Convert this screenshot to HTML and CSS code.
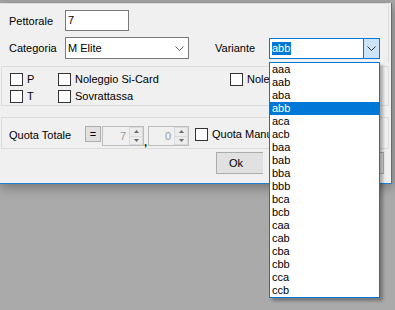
FILE: index.html
```html
<!DOCTYPE html>
<html lang="it">
<head>
    <meta charset="UTF-8">
    <title>Iscrizione</title>
    <link rel="stylesheet" href="styles.css">
</head>
<body>

    <div class="window">

        <!-- Dati concorrente -->
        <div class="grp grp-top">
            <div class="row">
                <span class="lbl-main">Pettorale</span>
                <div class="textbox">7</div>
            </div>
            <div class="row row-cat">
                <span class="lbl-main">Categoria</span>
                <div class="combo combo-cat">
                    <span class="combo-text">M Elite</span>
                    <span class="combo-arrow">
                        <svg width="9" height="5" viewBox="0 0 9 5"><polyline points="0.5,0.5 4.5,4.5 8.5,0.5" fill="none" stroke="#606060"/></svg>
                    </span>
                </div>
                <span class="lbl-var">Variante</span>
                <div class="combo combo-var">
                    <span class="combo-text"><span class="sel">abb</span></span>
                    <span class="combo-btn">
                        <svg width="9" height="5" viewBox="0 0 9 5"><polyline points="0.5,0.5 4.5,4.5 8.5,0.5" fill="none" stroke="#333"/></svg>
                    </span>
                </div>
            </div>
        </div>

        <!-- Opzioni -->
        <div class="grp grp-opt">
            <div class="opt-grid">
                <label class="chk"><span class="box"></span>P</label>
                <label class="chk"><span class="box"></span>Noleggio Si-Card</label>
                <label class="chk chk-clip"><span class="box"></span>Noleggio Chip</label>
                <label class="chk"><span class="box"></span>T</label>
                <label class="chk"><span class="box"></span>Sovrattassa</label>
            </div>
        </div>

        <!-- Quota -->
        <div class="grp grp-quota">
            <span class="lbl-quota">Quota Totale</span>
            <span class="eq-btn">=</span>
            <div class="spin spin-1">
                <span class="spin-val">7</span>
                <span class="spin-btns">
                    <span class="spin-up"><svg width="5" height="3" viewBox="0 0 5 3"><polygon points="2.5,0 5,3 0,3" fill="#6a6a6a"/></svg></span>
                    <span class="spin-down"><svg width="5" height="3" viewBox="0 0 5 3"><polygon points="0,0 5,0 2.5,3" fill="#6a6a6a"/></svg></span>
                </span>
            </div>
            <span class="comma">,</span>
            <div class="spin spin-2">
                <span class="spin-val">0</span>
                <span class="spin-btns">
                    <span class="spin-up"><svg width="5" height="3" viewBox="0 0 5 3"><polygon points="2.5,0 5,3 0,3" fill="#6a6a6a"/></svg></span>
                    <span class="spin-down"><svg width="5" height="3" viewBox="0 0 5 3"><polygon points="0,0 5,0 2.5,3" fill="#6a6a6a"/></svg></span>
                </span>
            </div>
            <label class="chk chk-quota"><span class="box"></span>Quota Manuale</label>
        </div>

        <div class="buttons">
            <button class="btn btn-ok">Ok</button>
            <button class="btn btn-cancel"></button>
        </div>

        <!-- Lista aperta della combo Variante -->
        <ul class="droplist">
            <li>aaa</li>
            <li>aab</li>
            <li>aba</li>
            <li class="hl">abb</li>
            <li>aca</li>
            <li>acb</li>
            <li>baa</li>
            <li>bab</li>
            <li>bba</li>
            <li>bbb</li>
            <li>bca</li>
            <li>bcb</li>
            <li>caa</li>
            <li>cab</li>
            <li>cba</li>
            <li>cbb</li>
            <li>cca</li>
            <li>ccb</li>
        </ul>
    </div>

</body>
</html>
```

FILE: styles.css
```css
body {
    margin: 0;
    width: 395px;
    height: 310px;
    overflow: hidden;
    background-color: #aaaaaa;
    font-family: "Liberation Sans", Arial, sans-serif;
    font-size: 11px;
    color: #000;
}

.window {
    position: relative;
    width: 391px;
    height: 180px;
    background-color: #f0f0f0;
    border-right: 1px solid #1a7fd4;
    border-bottom: 1px solid #1a7fd4;
    box-shadow: 0 3px 12px rgba(0, 0, 0, 0.35);
}

.grp {
    box-sizing: border-box;
    border: 1px solid #dcdcdc;
}

.grp-top {
    margin: 3px 0 0 -1px;
    width: 390px;
    height: 60px;
    border-left: none;
    border-bottom: none;
    padding: 6px 0 0 10px;
}

.row {
    display: flex;
    align-items: center;
    height: 21px;
}

.row-cat {
    margin-top: 6px;
    height: 22px;
}

.lbl-main {
    width: 56px;
}

.textbox {
    box-sizing: border-box;
    width: 64px;
    height: 21px;
    border: 1px solid #7a7a7a;
    background-color: #fff;
    padding-left: 2px;
    line-height: 19px;
}

.combo {
    display: flex;
    box-sizing: border-box;
    height: 22px;
    border: 1px solid #7a7a7a;
    background-color: #fff;
}

.combo-cat {
    width: 124px;
}

.combo-text {
    flex: 1;
    padding-left: 2px;
    line-height: 20px;
}

.combo-arrow {
    width: 17px;
    display: flex;
    align-items: center;
    justify-content: center;
}

.lbl-var {
    margin-left: 26px;
    width: 54px;
}

.combo-var {
    align-self: flex-end;
    width: 111px;
    height: 21px;
    border-color: #0078d7;
}

.combo-var .combo-text {
    line-height: 19px;
}

.sel {
    display: inline-block;
    background-color: #0078d7;
    color: #fff;
    line-height: 13px;
    padding-right: 1px;
}

.combo-btn {
    box-sizing: border-box;
    width: 16px;
    background-color: #cce4f7;
    border-left: 1px solid #0078d7;
    display: flex;
    align-items: center;
    justify-content: center;
}

.grp-opt {
    margin: 3px 0 0 1px;
    width: 388px;
    height: 40px;
    padding: 6px 0 0 8px;
}

.opt-grid {
    display: grid;
    grid-template-columns: 48px 172px auto;
    grid-auto-rows: 17px;
}

.chk {
    display: flex;
    align-items: flex-start;
    line-height: 13px;
    white-space: nowrap;
}

/* la lista aperta copre il resto del testo */
.chk-clip {
    width: 39px;
    overflow: hidden;
}

.box {
    box-sizing: border-box;
    width: 13px;
    height: 13px;
    border: 1px solid #333;
    background-color: #fff;
    margin-right: 4px;
    flex-shrink: 0;
}

.grp-quota {
    display: flex;
    align-items: flex-start;
    margin: 11px 0 0 1px;
    width: 388px;
    height: 32px;
    padding: 8px 0 0 7px;
}

.lbl-quota {
    width: 76px;
    line-height: 18px;
}

.eq-btn {
    box-sizing: border-box;
    width: 16px;
    height: 16px;
    border: 1px solid #adadad;
    background-color: #e1e1e1;
    text-align: center;
    line-height: 14px;
    margin-right: 1px;
}

.spin {
    display: flex;
    box-sizing: border-box;
    height: 20px;
    border: 1px solid #bcbcbc;
    background-color: #f0f0f0;
}

.spin-1 {
    width: 42px;
}

.spin-2 {
    width: 41px;
}

.spin-val {
    flex: 1;
    text-align: right;
    padding-right: 3px;
    line-height: 18px;
    color: #9a9a9a;
}

.spin-btns {
    display: flex;
    flex-direction: column;
    width: 14px;
}

.spin-up,
.spin-down {
    flex: 1;
    display: flex;
    align-items: center;
    justify-content: center;
    border: 1px solid #dadada;
    background-color: #ececec;
}

.spin-up {
    border-bottom: none;
}

.comma {
    width: 4px;
    padding-top: 11px;
    line-height: 11px;
    font-weight: bold;
}

.chk-quota {
    margin: 2px 0 0 6px;
    width: 74px;
    overflow: hidden;
}

.buttons {
    display: flex;
    justify-content: flex-end;
    gap: 6px;
    margin-top: 3px;
    padding-right: 7px;
}

.btn {
    box-sizing: border-box;
    width: 78px;
    height: 22px;
    border: 1px solid #adadad;
    background-color: #e1e1e1;
    font-family: inherit;
    font-size: 11px;
    color: #000;
    padding: 0;
}

.btn-ok {
    width: 47px;
    margin-right: 37px;
    text-align: left;
    padding-left: 12px;
    border-right: none;
}

.droplist {
    position: absolute;
    left: 269px;
    top: 59px;
    z-index: 2;
    box-sizing: border-box;
    width: 111px;
    margin: 0;
    padding: 0;
    list-style-type: none;
    background-color: #fff;
    border: 1px solid #0078d7;
    box-shadow: 3px 3px 3px rgba(0, 0, 0, 0.3);
}

.droplist li {
    height: 13px;
    line-height: 13px;
    padding-left: 2px;
}

.droplist .hl {
    background-color: #0078d7;
    color: #fff;
}
```
